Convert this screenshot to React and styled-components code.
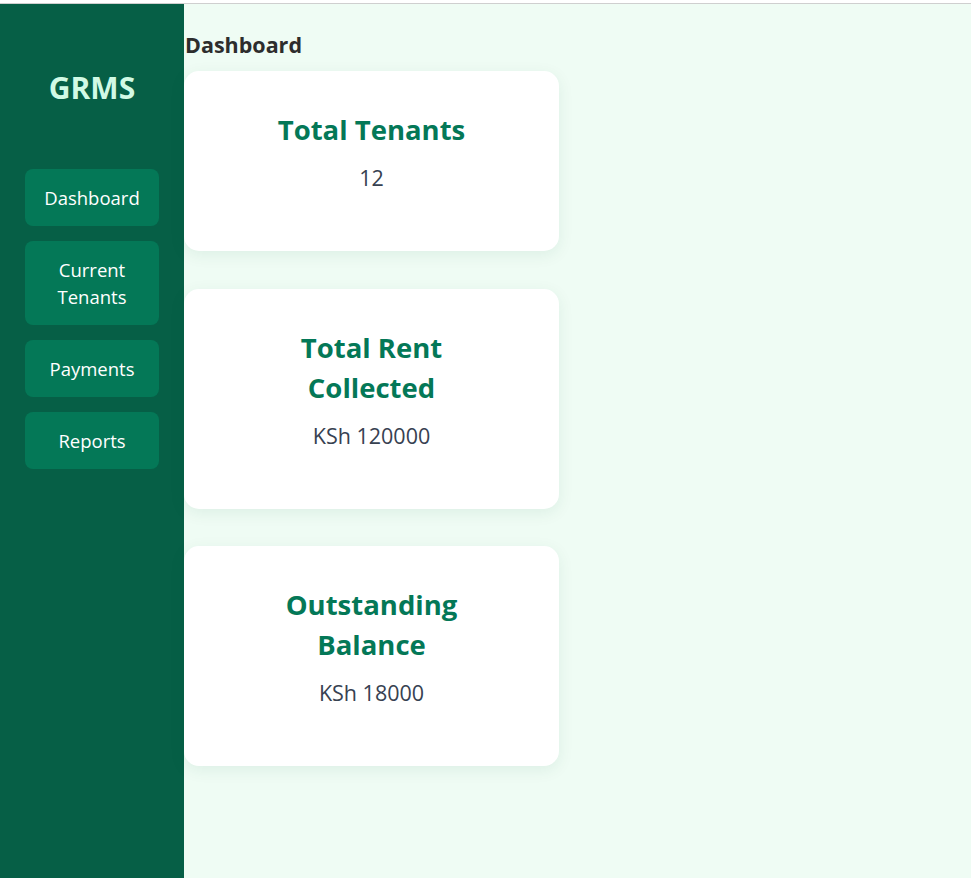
import styled, { createGlobalStyle } from 'styled-components';

const GlobalStyle = createGlobalStyle`
  body {
    margin: 0;
    padding-top: 3px;
    background: #ffffff;
    font-family: "Open Sans", "Noto Sans", sans-serif;
  }
`;

const stats = [
  { title: 'Total Tenants', value: '12' },
  { title: 'Total Rent Collected', value: 'KSh 120000' },
  { title: 'Outstanding Balance', value: 'KSh 18000' },
];

const navItems = ['Dashboard', 'Current Tenants', 'Payments', 'Reports'];

const App = () => {
  return (
    <>
      <GlobalStyle />
      <Layout>
        <Sidebar>
          <Logo>GRMS</Logo>
          <Nav>
            {navItems.map((item) => (
              <NavButton key={item}>{item}</NavButton>
            ))}
          </Nav>
        </Sidebar>
        <Main>
          <PageTitle>Dashboard</PageTitle>
          <CardList>
            {stats.map((s) => (
              <StatCard key={s.title}>
                <CardTitle>{s.title}</CardTitle>
                <CardValue>{s.value}</CardValue>
              </StatCard>
            ))}
          </CardList>
        </Main>
      </Layout>
    </>
  );
};

const Layout = styled.div`
  display: flex;
  min-height: calc(100vh - 4px);
  border-top: 1px solid #cfcfcf;
  background: #effcf4;
`;

const Sidebar = styled.aside`
  width: 184px;
  box-sizing: border-box;
  padding: 0 25px;
  background: #065f46;
  flex-shrink: 0;
`;

const Logo = styled.h2`
  margin: 65px 0 63px;
  font-size: 30px;
  line-height: 37px;
  font-weight: 700;
  color: #d1fae5;
  text-align: center;
`;

const Nav = styled.nav`
  display: flex;
  flex-direction: column;
  gap: 15px;
`;

const NavButton = styled.button`
  border: none;
  border-radius: 8px;
  padding: 15px;
  background: #047857;
  color: #ffffff;
  font-family: inherit;
  font-size: 18.5px;
  line-height: 27px;
  text-align: center;
  cursor: pointer;
`;

const Main = styled.main`
  flex: 1;
  padding-top: 27px;
`;

const PageTitle = styled.h1`
  margin: 0 0 13px 1px;
  font-size: 21.5px;
  line-height: 27px;
  font-weight: 700;
  color: #2d2d2d;
`;

const CardList = styled.div`
  display: flex;
  flex-direction: column;
  gap: 37.5px;
  width: 375px;
`;

const StatCard = styled.div`
  box-sizing: border-box;
  padding: 39px 57px 59px;
  background: #ffffff;
  border-radius: 15px;
  box-shadow: 0 4px 16px rgba(6, 95, 70, 0.08);
  text-align: center;
`;

const CardTitle = styled.h3`
  margin: 0 0 13px;
  font-size: 27.5px;
  line-height: 40px;
  font-weight: 700;
  color: #047857;
`;

const CardValue = styled.p`
  margin: 0;
  font-size: 21.5px;
  line-height: 29px;
  color: #374151;
`;

export default App;
